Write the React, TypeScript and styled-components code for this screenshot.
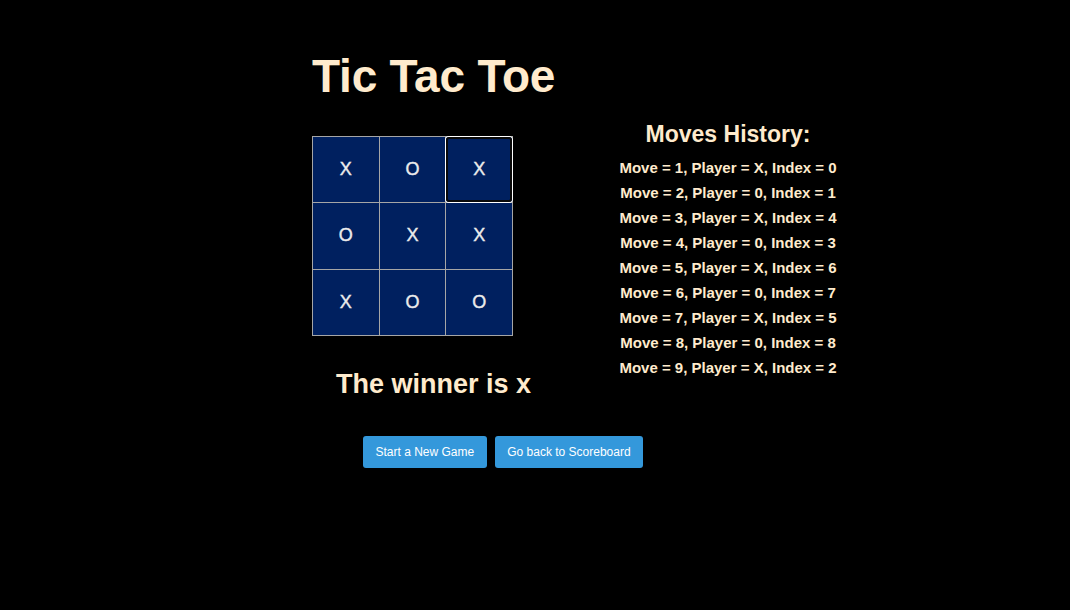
import React from "react";
import styled, { createGlobalStyle } from "styled-components";

const Global = createGlobalStyle`
  html, body { margin: 0; padding: 0; background: #000; }
  body { font-family: "Liberation Sans", Arial, sans-serif; }
`;

const Page = styled.div`
  min-height: 610px;
  background: #000;
  padding: 53px 0 0 312px;
  box-sizing: border-box;
  color: #ffebcd;
`;

const Title = styled.h1`
  margin: 0;
  font-size: 46px;
  line-height: 46px;
  font-weight: 700;
  letter-spacing: -0.2px;
  color: #ffebcd;
`;

const Row = styled.div`
  display: flex;
  align-items: flex-start;
  margin-top: 21px;
  gap: 45px;
`;

const LeftCol = styled.div`
  width: 243px;
  padding-top: 16px;
  display: flex;
  flex-direction: column;
`;

const Board = styled.div`
  width: 201px;
  height: 200px;
  box-sizing: border-box;
  display: grid;
  grid-template-columns: repeat(3, 1fr);
  grid-template-rows: repeat(3, 1fr);
  gap: 1px;
  padding: 1px;
  background: #a6a6a6;
`;

const Cell = styled.button<{ $focused?: boolean }>`
  border: none;
  margin: 0;
  padding: 0;
  background: #00205f;
  color: #ececec;
  font-family: "Liberation Sans", Arial, sans-serif;
  font-size: 18px;
  -webkit-text-stroke: 0.4px #ececec;
  cursor: pointer;
  border-radius: ${(p) => (p.$focused ? "3px" : "0")};
  box-shadow: ${(p) =>
    p.$focused ? "inset 0 0 0 2px #0a0a0a, 0 0 0 1px #ffffff" : "none"};
  position: relative;
  z-index: ${(p) => (p.$focused ? 1 : 0)};
`;

const Winner = styled.h2`
  margin: 32px 0 0;
  text-align: center;
  font-size: 27px;
  line-height: 32px;
  font-weight: 700;
  color: #ffebcd;
`;

const RightCol = styled.div`
  width: 256px;
  display: flex;
  flex-direction: column;
  align-items: center;
`;

const HistoryTitle = styled.h3`
  margin: 0;
  font-size: 23px;
  line-height: 28px;
  font-weight: 700;
  color: #ffebcd;
`;

const MoveList = styled.div`
  margin-top: 7px;
  display: flex;
  flex-direction: column;
  align-items: center;
`;

const MoveLine = styled.div`
  font-size: 15px;
  line-height: 25px;
  font-weight: 700;
  color: #ffebcd;
  white-space: nowrap;
`;

const Buttons = styled.div`
  display: flex;
  gap: 8px;
  margin: 36px 0 0 51px;
`;

const ActionButton = styled.button`
  height: 32px;
  padding: 0 12.5px;
  border: none;
  border-radius: 3px;
  background: #3498db;
  color: #fff;
  font-family: "Liberation Sans", Arial, sans-serif;
  font-size: 12px;
  cursor: pointer;
`;

const board = ["X", "O", "X", "O", "X", "X", "X", "O", "O"];
const moves = [
  { player: "X", index: 0 },
  { player: "0", index: 1 },
  { player: "X", index: 4 },
  { player: "0", index: 3 },
  { player: "X", index: 6 },
  { player: "0", index: 7 },
  { player: "X", index: 5 },
  { player: "0", index: 8 },
  { player: "X", index: 2 },
];

export default function App() {
  return (
    <>
      <Global />
      <Page>
        <Title>Tic Tac Toe</Title>
        <Row>
          <LeftCol>
            <Board>
              {board.map((v, i) => (
                <Cell key={i} $focused={i === 2}>
                  {v}
                </Cell>
              ))}
            </Board>
            <Winner>The winner is x</Winner>
          </LeftCol>
          <RightCol>
            <HistoryTitle>Moves History:</HistoryTitle>
            <MoveList>
              {moves.map((m, i) => (
                <MoveLine key={i}>
                  Move = {i + 1}, Player = {m.player}, Index = {m.index}
                </MoveLine>
              ))}
            </MoveList>
          </RightCol>
        </Row>
        <Buttons>
          <ActionButton>Start a New Game</ActionButton>
          <ActionButton>Go back to Scoreboard</ActionButton>
        </Buttons>
      </Page>
    </>
  );
}
